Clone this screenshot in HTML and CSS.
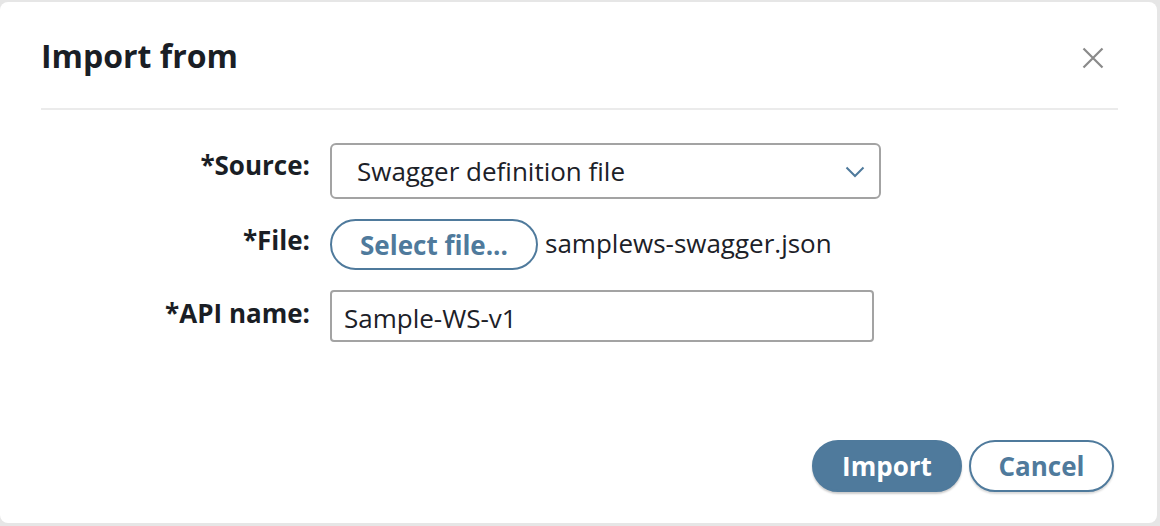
FILE: index.html
```html
<!DOCTYPE html>
<html>
<head>
<meta charset="utf-8">
<link rel="stylesheet" href="styles.css">
</head>
<body>
<div class="dialog">
  <div class="header">
    <h1 class="title">Import from</h1>
    <button class="close" aria-label="Close">
      <svg width="22" height="22" viewBox="0 0 22 22"><path d="M1.5 1.5L20.5 20.5M20.5 1.5L1.5 20.5" stroke="#8a8a8a" stroke-width="2.2" fill="none"/></svg>
    </button>
  </div>
  <div class="form">
    <label class="label l1">*Source:</label>
    <div class="select">
      <span class="select-text">Swagger definition file</span>
      <svg class="chev" width="20" height="12" viewBox="0 0 20 12"><path d="M1.5 1.5L10 10L18.5 1.5" stroke="#4f7a9c" stroke-width="2" fill="none"/></svg>
    </div>
    <label class="label l2">*File:</label>
    <div class="filerow">
      <button class="btn-outline select-file">Select file...</button>
      <span class="filename">samplews-swagger.json</span>
    </div>
    <label class="label l3">*API name:</label>
    <div class="input"><span class="input-text">Sample-WS-v1</span></div>
  </div>
  <div class="footer">
    <button class="btn-primary">Import</button>
    <button class="btn-outline cancel">Cancel</button>
  </div>
</div>
</body>
</html>
```
FILE: styles.css
```css
html, body {
  margin: 0;
  padding: 0;
}
body {
  background: #e6e6e6;
  font-family: "Open Sans", "Noto Sans", sans-serif;
  color: #1c2128;
  width: 1160px;
  height: 526px;
  overflow: hidden;
}
.dialog {
  margin: 2px 3px 0 0;
  height: 521px;
  background: #fff;
  border-radius: 8px;
  display: flex;
  flex-direction: column;
}
.header {
  margin: 0 39px 0 41px;
  height: 106px;
  border-bottom: 2px solid #ebebeb;
  display: flex;
  align-items: flex-start;
  justify-content: space-between;
}
.title {
  margin: 0;
  padding-top: 38px;
  font-size: 32px;
  font-weight: 700;
  line-height: 32px;
  color: #1a1e25;
}
.close {
  border: 0;
  background: none;
  padding: 0;
  margin: 45px 14px 0 0;
  width: 22px;
  height: 22px;
  display: flex;
}
.form {
  margin-top: 33px;
  display: grid;
  grid-template-columns: 310px 551px;
  grid-template-rows: 56px 51px 52px;
  row-gap: 20px;
  column-gap: 20px;
  align-items: center;
}
.label {
  justify-self: end;
  font-weight: 700;
  font-size: 26px;
  color: #1a1e25;
}
.l1 { margin-bottom: 13px; }
.l2 { margin-bottom: 10px; }
.l3 { margin-bottom: 6px; }
.select {
  box-sizing: border-box;
  height: 56px;
  border: 2px solid #a3a3a3;
  border-radius: 6px;
  display: flex;
  align-items: center;
  justify-content: space-between;
  padding: 0 14px 0 25px;
  font-size: 26px;
}
.chev { margin-top: 1px; }
.filerow {
  display: flex;
  align-items: center;
  gap: 7px;
  height: 51px;
}
.filename {
  font-size: 26px;
  margin-bottom: 4px;
}
.btn-outline, .btn-primary {
  font-family: "Open Sans", "Noto Sans", sans-serif;
  font-weight: 700;
  font-size: 26px;
  border-radius: 27px;
  box-sizing: border-box;
  cursor: pointer;
  padding: 0;
}
.btn-outline {
  background: #fff;
  border: 2px solid #4f7a9c;
  color: #4f7a9c;
}
.select-file {
  width: 208px;
  height: 51px;
}
.input {
  box-sizing: border-box;
  width: 544px;
  height: 52px;
  border: 2px solid #a3a3a3;
  border-radius: 4px;
  display: flex;
  align-items: center;
  padding: 0 12px;
  font-size: 26px;
}
.input-text { margin-top: 4px; }
.footer {
  margin-top: auto;
  margin-bottom: 31px;
  margin-right: 43px;
  display: flex;
  justify-content: flex-end;
  gap: 7px;
}
.btn-primary {
  background: #4f7a9c;
  border: 2px solid #4f7a9c;
  color: #fff;
  width: 150px;
  height: 52px;
  box-shadow: 0 2px 2px rgba(0,0,0,0.2);
}
.cancel {
  width: 145px;
  height: 52px;
  box-shadow: 0 2px 2px rgba(0,0,0,0.15);
}
```
